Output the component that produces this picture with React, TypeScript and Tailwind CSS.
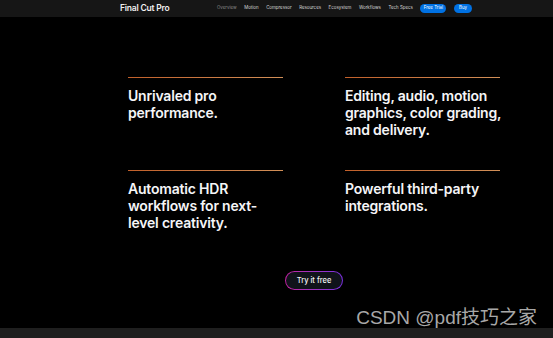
const links = ["Motion", "Compressor", "Resources", "Ecosystem", "Workflows", "Tech Specs"];

const features = [
  ["Unrivaled pro", "performance."],
  ["Editing, audio, motion", "graphics, color grading,", "and delivery."],
  ["Automatic HDR", "workflows for next-", "level creativity."],
  ["Powerful third-party", "integrations."],
];

function Feature({ lines }: { lines: string[] }) {
  return (
    <div className="w-[155px]">
      <div className="h-px bg-linear-to-r from-[#c2602a] to-[#d29058]" />
      <h3 className="mt-[9px] text-[14px] font-semibold leading-[17px] tracking-[-0.2px] text-[#f5f5f7] whitespace-nowrap">
        {lines.map((l) => (
          <div key={l}>{l}</div>
        ))}
      </h3>
    </div>
  );
}

export default function App() {
  return (
    <div className="relative h-[338px] w-[553px] overflow-hidden bg-black font-['Inter',sans-serif]">
      {/* local nav */}
      <nav className="flex h-[17px] items-center bg-[#161616] pl-[120px]">
        <span className="w-[97px] text-[8.5px] font-semibold tracking-[-0.2px] text-[#f0f0f0]">Final Cut Pro</span>
        <div className="flex items-center gap-[7.6px] text-[4.4px] text-[#d6d6d6]">
          <span className="text-[#8a8a8a]">Overview</span>
          {links.map((l) => (
            <span key={l}>{l}</span>
          ))}
          <span className="flex h-[9px] w-[26px] items-center justify-center rounded-full bg-[#0071e3] text-white">
            Free Trial
          </span>
          <span className="flex h-[9px] w-[18px] items-center justify-center rounded-full bg-[#0071e3] text-white">
            Buy
          </span>
        </div>
      </nav>

      <div className="ml-[128px] mt-[60px] grid w-[372px] grid-cols-[155px_155px] gap-x-[62px] gap-y-[32px]">
        {features.map((f) => (
          <Feature key={f[0]} lines={f} />
        ))}
      </div>

      <div className="ml-[285px] mt-[40px] w-[58px] rounded-full bg-linear-to-r from-[#c21fa0] to-[#7a2fe0] p-px">
        <div className="flex h-[17px] items-center justify-center rounded-full bg-[#10131a] text-[7.5px] font-medium text-[#f2f2f2]">
          Try it free
        </div>
      </div>

      <div className="absolute right-[16px] bottom-[6px] font-['Liberation_Sans','Noto_Sans_CJK_SC',sans-serif] text-[19px] text-[#a8a8a8]">
        CSDN @pdf技巧之家
      </div>
      <div className="absolute bottom-0 left-0 h-[10px] w-full bg-[#1f1f1f]" />
    </div>
  );
}
